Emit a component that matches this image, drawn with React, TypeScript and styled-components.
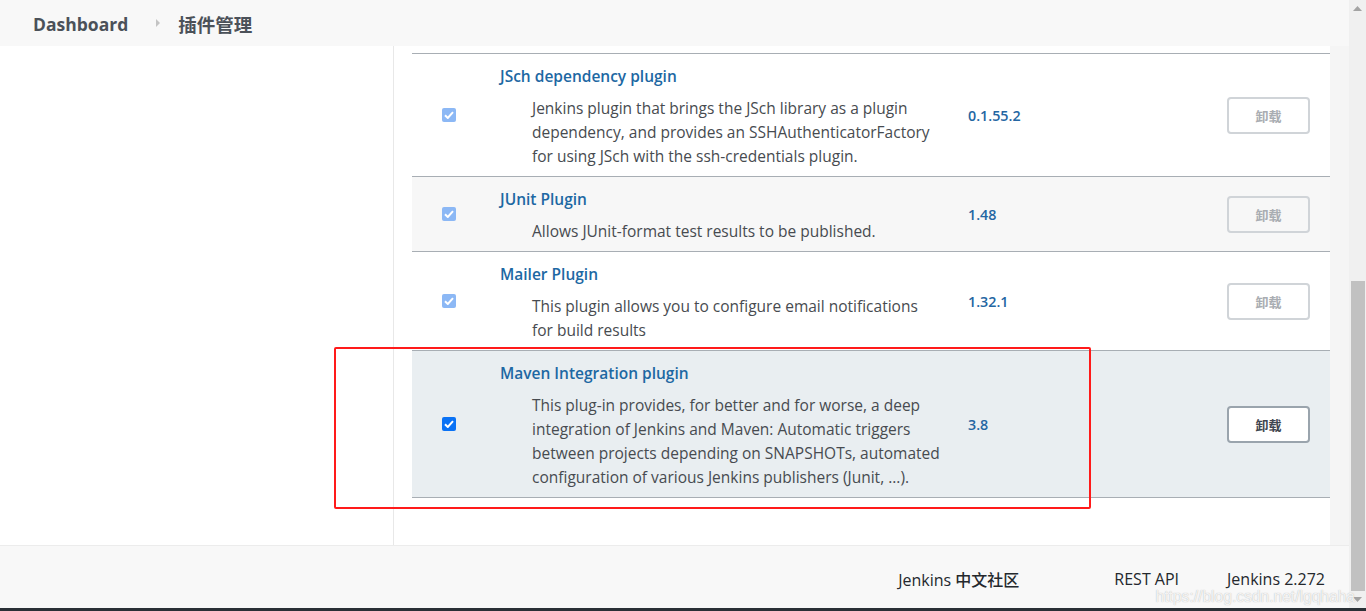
import styled, { createGlobalStyle } from 'styled-components';

type Plugin = {
    name: string,
    desc: string[],
    version: string,
    tone: 'plain' | 'stripe' | 'active',
    enabled: boolean
};

const plugins: Plugin[] = [
    {
        name: 'JSch dependency plugin',
        desc: [
            'Jenkins plugin that brings the JSch library as a plugin',
            'dependency, and provides an SSHAuthenticatorFactory',
            'for using JSch with the ssh-credentials plugin.'
        ],
        version: '0.1.55.2',
        tone: 'plain',
        enabled: false
    },
    {
        name: 'JUnit Plugin',
        desc: ['Allows JUnit-format test results to be published.'],
        version: '1.48',
        tone: 'stripe',
        enabled: false
    },
    {
        name: 'Mailer Plugin',
        desc: [
            'This plugin allows you to configure email notifications',
            'for build results'
        ],
        version: '1.32.1',
        tone: 'plain',
        enabled: false
    },
    {
        name: 'Maven Integration plugin',
        desc: [
            'This plug-in provides, for better and for worse, a deep',
            'integration of Jenkins and Maven: Automatic triggers',
            'between projects depending on SNAPSHOTs, automated',
            'configuration of various Jenkins publishers (Junit, ...).'
        ],
        version: '3.8',
        tone: 'active',
        enabled: true
    }
];

const rowBg = {
    plain: '#ffffff',
    stripe: '#f7f7f7',
    active: '#e9eef1'
};

function App() {
    return (
        <>
            <GlobalStyle />
            <Frame>
                <Window>
                    <Page>
                        <Header>
                            <Crumb>Dashboard</Crumb>
                            <Chevron />
                            <Crumb $size={18.5}>插件管理</Crumb>
                        </Header>
                        <Main>
                            <Sidebar />
                            <Content>
                                <Table>
                                    {plugins.map((p) => (
                                        <PluginRow key={p.name} plugin={p} />
                                    ))}
                                </Table>
                                <Highlight />
                            </Content>
                        </Main>
                        <Footer>
                            <FooterLink>Jenkins 中文社区</FooterLink>
                            <FooterLink $space={95}>REST API</FooterLink>
                            <FooterLink $space={48}>Jenkins 2.272</FooterLink>
                            <Watermark>https://blog.csdn.net/lgqhaha</Watermark>
                        </Footer>
                    </Page>
                    <Scrollbar>
                        <ScrollArrow>
                            <svg width="9" height="5" viewBox="0 0 9 5"><path d="M0 5 L4.5 0 L9 5 Z" fill="#a3a3a3" /></svg>
                        </ScrollArrow>
                        <Track>
                            <Thumb />
                        </Track>
                        <ScrollArrow>
                            <svg width="9" height="5" viewBox="0 0 9 5"><path d="M0 0 L4.5 5 L9 0 Z" fill="#a3a3a3" /></svg>
                        </ScrollArrow>
                    </Scrollbar>
                </Window>
                <Taskbar />
            </Frame>
        </>
    );
}

export default App;

type RowProps = {
    plugin: Plugin
};

function PluginRow(props: RowProps) {
    const { plugin } = props;

    return (
        <Row $tone={plugin.tone}>
            <Cell>
                <Check $enabled={plugin.enabled}>
                    <svg width="10" height="8" viewBox="0 0 10 8">
                        <path d="M1 4.2 L3.8 7 L9 1.2" fill="none" stroke="#fff" strokeWidth="2" />
                    </svg>
                </Check>
            </Cell>
            <NameCell>
                <Title>{plugin.name}</Title>
                <Desc>
                    {plugin.desc.map((line) => (
                        <div key={line}>{line}</div>
                    ))}
                </Desc>
            </NameCell>
            <Version>{plugin.version}</Version>
            <ButtonCell>
                <Uninstall $enabled={plugin.enabled}>卸载</Uninstall>
            </ButtonCell>
        </Row>
    );
}

const GlobalStyle = createGlobalStyle`
    html, body {
        margin: 0;
        padding: 0;
        overflow: hidden;
        background: #ffffff;
    }
    body {
        font-family: "Open Sans", "Noto Sans CJK SC", sans-serif;
    }
`

const Frame = styled.div`
    display: flex;
    flex-direction: column;
    width: 1366px;
    height: 611px;
`
const Window = styled.div`
    display: flex;
    height: 608px;
`
const Page = styled.div`
    flex: 1;
    display: flex;
    flex-direction: column;
    background-color: #f5f5f5;
`
const Header = styled.div`
    display: flex;
    align-items: center;
    box-sizing: border-box;
    height: 46px;
    padding: 2px 0 0 33px;
    background-color: #f8f8f8;
    flex-shrink: 0;
`
const Crumb = styled.span<{ $size?: number }>`
    font-size: ${(p) => p.$size ?? 17.5}px;
    font-weight: 700;
    color: #4b5159;
`
const Chevron = styled.span`
    width: 0;
    height: 0;
    margin: 0 18px 2px 28px;
    border-top: 4px solid transparent;
    border-bottom: 4px solid transparent;
    border-left: 4px solid #c4c4c4;
`
const Main = styled.div`
    display: flex;
    height: 499px;
`
const Sidebar = styled.div`
    width: 393px;
    background-color: #ffffff;
    border-right: 1px solid #e8e8e8;
`
const Content = styled.div`
    position: relative;
    flex: 1;
    margin-right: 19px;
    padding: 7px 0 0 18px;
    background-color: #ffffff;
`
const Table = styled.div`
    display: flex;
    flex-direction: column;
    border-top: 1px solid #a8aeb4;
`
const Row = styled.div<{ $tone: Plugin['tone'] }>`
    display: grid;
    grid-template-columns: 76px 468px 1fr 140px;
    align-items: center;
    background-color: ${(p) => rowBg[p.$tone]};
    border-bottom: 1px solid #a8aeb4;
`
const Cell = styled.div`
    display: flex;
    justify-content: center;
`
const Check = styled.span<{ $enabled: boolean }>`
    display: flex;
    align-items: center;
    justify-content: center;
    width: 14px;
    height: 14px;
    border-radius: 2px;
    margin-right: 2px;
    background-color: ${(p) => (p.$enabled ? '#0a72f5' : '#8cb8f5')};
`
const NameCell = styled.div`
    padding: 10px 12px 8px;
`
const Title = styled.div`
    font-size: 15.5px;
    font-weight: 600;
    line-height: 24px;
    color: #1d68a3;
    margin-bottom: 8px;
`
const Desc = styled.div`
    padding-left: 32px;
    font-size: 15.5px;
    line-height: 24px;
    color: #474b50;
    white-space: nowrap;
`
const Version = styled.div`
    padding-left: 12px;
    font-size: 14.3px;
    font-weight: 600;
    color: #2466a2;
`
const ButtonCell = styled.div`
    display: flex;
    justify-content: flex-end;
    padding-right: 20px;
`
const Uninstall = styled.div<{ $enabled: boolean }>`
    display: flex;
    align-items: center;
    justify-content: center;
    box-sizing: border-box;
    width: 83px;
    height: 37px;
    border-radius: 4px;
    border: 2px solid ${(p) => (p.$enabled ? '#9aa4ad' : '#d0d4d8')};
    background-color: ${(p) => (p.$enabled ? '#ffffff' : 'transparent')};
    color: ${(p) => (p.$enabled ? '#3f4650' : '#a9adb2')};
    font-size: 13px;
    font-weight: 700;
`
const Highlight = styled.div`
    position: absolute;
    left: -60px;
    top: 301px;
    width: 753px;
    height: 158px;
    border: 2px solid #ff1a1a;
    border-radius: 2px;
    pointer-events: none;
`
const Footer = styled.div`
    position: relative;
    z-index: 1;
    display: flex;
    align-items: center;
    justify-content: flex-end;
    flex: 1;
    padding: 3px 24px 0 0;
    background-color: #f8f8f8;
    border-top: 1px solid #ececec;
`
const FooterLink = styled.span<{ $space?: number }>`
    margin-left: ${(p) => p.$space ?? 0}px;
    font-size: 16px;
    font-weight: 500;
    color: #24282d;
`
const Watermark = styled.span`
    position: absolute;
    right: -6px;
    bottom: 2px;
    font-family: "Liberation Sans", Arial, sans-serif;
    font-size: 15.6px;
    color: rgba(255, 255, 255, 0.85);
    text-shadow: 0 0 1px rgba(120, 120, 120, 0.6);
    white-space: nowrap;
`
const Scrollbar = styled.div`
    display: flex;
    flex-direction: column;
    width: 17px;
    background-color: #f0f0f0;
`
const ScrollArrow = styled.div`
    display: flex;
    align-items: center;
    justify-content: center;
    height: 17px;
`
const Track = styled.div`
    flex: 1;
    display: flex;
    flex-direction: column;
    justify-content: flex-end;
    padding: 0 1px 0 2px;
`
const Thumb = styled.div`
    height: 310px;
    background-color: #c1c1c1;
`
const Taskbar = styled.div`
    height: 3px;
    background-color: #2a3036;
`
